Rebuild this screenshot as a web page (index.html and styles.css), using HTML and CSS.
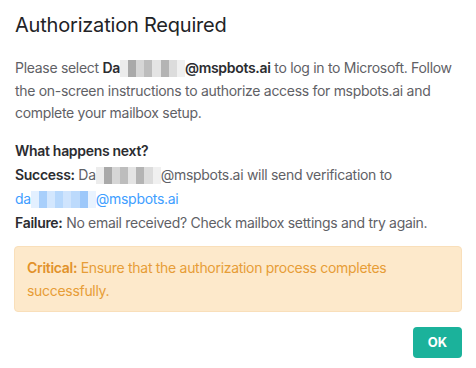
FILE: index.html
```html
<!DOCTYPE html>
<html lang="en">
<head>
  <meta charset="UTF-8">
  <meta name="viewport" content="width=device-width, initial-scale=1.0">
  <title>Authorization Required</title>
  <link rel="stylesheet" href="styles.css">
</head>
<body>
  <div class="dialog">
    <h2 class="title">Authorization Required</h2>

    <p class="intro">
      Please select <strong>Da<span class="mosaic"><i></i><i></i><i></i><i></i><i></i><i></i><i></i><i></i></span>@mspbots.ai</strong> to log in to Microsoft. Follow the on-screen instructions to authorize access for mspbots.ai and complete your mailbox setup.
    </p>

    <div class="next">
      <div class="next-title">What happens next?</div>
      <div class="line"><strong>Success:</strong> Da<span class="mosaic"><i></i><i></i><i></i><i></i><i></i><i></i><i></i><i></i></span>@mspbots.ai will send verification to</div>
      <div class="line"><a class="mail" href="#">da<span class="mosaic blue"><i></i><i></i><i></i><i></i><i></i><i></i><i></i><i></i></span>@mspbots.ai</a></div>
      <div class="line"><strong>Failure:</strong> No email received? Check mailbox settings and try again.</div>
    </div>

    <div class="alert">
      <strong>Critical:</strong> Ensure that the authorization process completes successfully.
    </div>

    <div class="footer">
      <button class="ok">OK</button>
    </div>
  </div>
</body>
</html>
```

FILE: styles.css
```css
body {
  margin: 0;
  background: #ffffff;
  font-family: Inter, "Noto Sans", Arial, sans-serif;
  color: #5f6166;
}

.dialog {
  padding: 11px 14px 10px 15px;
}

.title {
  margin: 0 0 18px;
  font-size: 20px;
  line-height: 28px;
  font-weight: 400;
  letter-spacing: -0.2px;
  color: #222326;
}

.intro {
  margin: 0 0 14px;
  font-size: 14px;
  line-height: 22.5px;
  letter-spacing: -0.3px;
}

.intro strong,
.next strong,
.next-title {
  color: #2b2c30;
  font-weight: 600;
}

.next {
  font-size: 14px;
  line-height: 24px;
  letter-spacing: -0.3px;
}

.mail {
  color: #409eff;
  text-decoration: none;
}

.mosaic {
  display: inline-flex;
  width: 65px;
  height: 17px;
  vertical-align: -4px;
}

.mosaic i {
  flex: 1;
  background: #c9c9c9;
}

.mosaic i:nth-child(1) { background: #ececec; }
.mosaic i:nth-child(2) { background: #a9a9a9; }
.mosaic i:nth-child(3) { background: #d6d6d6; }
.mosaic i:nth-child(4) { background: #bdbdbd; }
.mosaic i:nth-child(5) { background: #e4e4e4; }
.mosaic i:nth-child(6) { background: #b4b4b4; }
.mosaic i:nth-child(7) { background: #dcdcdc; }
.mosaic i:nth-child(8) { background: #f0f0f0; }

.mosaic.blue i:nth-child(1) { background: #e3f0ff; }
.mosaic.blue i:nth-child(2) { background: #a8cffb; }
.mosaic.blue i:nth-child(3) { background: #d3e7fe; }
.mosaic.blue i:nth-child(4) { background: #b7d8fc; }
.mosaic.blue i:nth-child(5) { background: #cfe4fd; }
.mosaic.blue i:nth-child(6) { background: #bcdafc; }
.mosaic.blue i:nth-child(7) { background: #9dc8fa; }
.mosaic.blue i:nth-child(8) { background: #e9f3ff; }

.alert {
  margin: 11px 0 0 -1px;
  padding: 9px 12px;
  background: #fde9cb;
  border: 1px solid #f9dfba;
  border-radius: 4px;
  font-size: 14px;
  line-height: 23px;
  letter-spacing: -0.3px;
  color: #e79d37;
}

.alert strong {
  font-weight: 600;
  color: #e2922a;
}

.footer {
  display: flex;
  justify-content: flex-end;
  margin-top: 15px;
}

.ok {
  width: 49px;
  height: 31px;
  border: none;
  border-radius: 4px;
  background: #1bb29b;
  color: #ffffff;
  font-family: inherit;
  font-size: 13px;
  font-weight: 700;
  cursor: pointer;
}
```
